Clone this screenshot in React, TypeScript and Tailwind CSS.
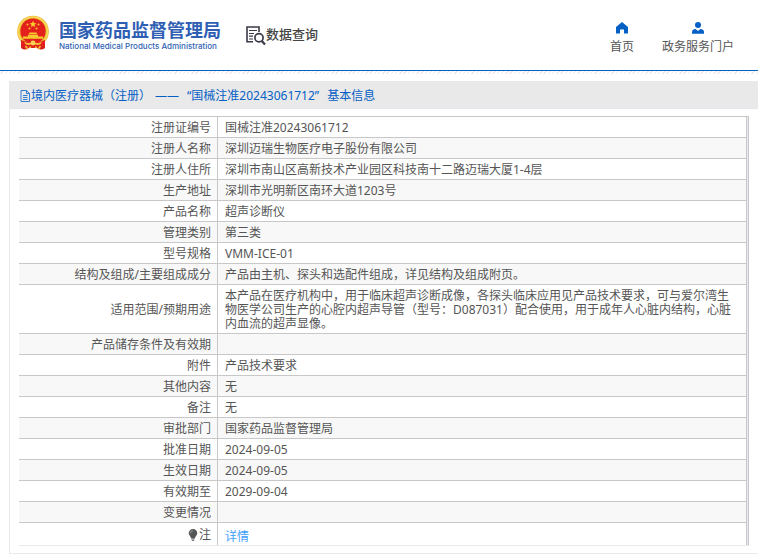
import React from "react";

interface InfoRow {
  label: string;
  value: string;
}

const rows: InfoRow[] = [
  { label: "注册证编号", value: "国械注准20243061712" },
  { label: "注册人名称", value: "深圳迈瑞生物医疗电子股份有限公司" },
  {
    label: "注册人住所",
    value: "深圳市南山区高新技术产业园区科技南十二路迈瑞大厦1-4层",
  },
  { label: "生产地址", value: "深圳市光明新区南环大道1203号" },
  { label: "产品名称", value: "超声诊断仪" },
  { label: "管理类别", value: "第三类" },
  { label: "型号规格", value: "VMM-ICE-01" },
  {
    label: "结构及组成/主要组成成分",
    value: "产品由主机、探头和选配件组成，详见结构及组成附页。",
  },
  {
    label: "适用范围/预期用途",
    value:
      "本产品在医疗机构中，用于临床超声诊断成像，各探头临床应用见产品技术要求，可与爱尔湾生物医学公司生产的心腔内超声导管（型号：D087031）配合使用，用于成年人心脏内结构，心脏内血流的超声显像。",
  },
  { label: "产品储存条件及有效期", value: "" },
  { label: "附件", value: "产品技术要求" },
  { label: "其他内容", value: "无" },
  { label: "备注", value: "无" },
  { label: "审批部门", value: "国家药品监督管理局" },
  { label: "批准日期", value: "2024-09-05" },
  { label: "生效日期", value: "2024-09-05" },
  { label: "有效期至", value: "2029-09-04" },
  { label: "变更情况", value: "" },
];

const Emblem: React.FC = () => (
  <svg width="34" height="36" viewBox="0 0 34 36" aria-hidden="true">
    <path d="M5 24L5 33Q9 36 13 33L21 33Q25 36 29 33L29 24Z" fill="#d8201c" />
    <circle cx="17" cy="16.5" r="15.8" fill="#e9b52c" />
    <circle cx="17" cy="16.5" r="14.4" fill="none" stroke="#f7d75a" strokeWidth="1.6" />
    <circle cx="17" cy="16" r="12.6" fill="#e3201b" />
    <path d="M5 25q12 5 24 0v6q-12 4-24 0z" fill="#e3201b" />
    <path
      d="M17 5.8l1 2.1 2.3.3-1.7 1.6.4 2.3-2-1.1-2 1.1.4-2.3-1.700-1.600 2.300-.3z"
      fill="#f8c92f"
    />
    <g fill="#f8c92f">
      <circle cx="11.5" cy="9.500" r="1" />
      <circle cx="22.5" cy="9.500" r="1" />
      <circle cx="13.5" cy="13.500" r="1" />
      <circle cx="20.5" cy="13.500" r="1" />
      <path d="M12.5 19.200l1.200-1.600h6.600l1.200 1.600z" />
      <path d="M12 19.800h10v1.700h5v2.200H7v-2.200h5z" />
    </g>
    <path
      d="M8 26.500q4.500 3 9 .2 4.500 2.800 9-.2l-1.500 2.700q-3.500 1.800-7.500-.7-4 2.500-7.500.7z"
      fill="#f1c23a"
    />
    <circle cx="17" cy="28" r="2.400" fill="#f8d35a" />
    <path
      d="M9.500 31l2 2.800M24.500 31l-2 2.800M13.500 33l1.200-1.600M20.500 33l-1.200-1.600"
      stroke="#f1c23a"
      strokeWidth="1.6"
    />
  </svg>
);

const QueryIcon: React.FC = () => (
  <svg width="20" height="20" viewBox="0 0 20 20" fill="none" stroke="#3b3946" aria-hidden="true">
    <path d="M7 15.800H1V1h12v5" strokeWidth="1.6" />
    <path d="M3 4.500h8M3 7.500h5M3 10.200h4M3 13h4" strokeWidth="1.2" />
    <circle cx="13" cy="11.8" r="4.1" strokeWidth="1.7" />
    <path d="M15.800 15l3.200 3.600" strokeWidth="2.2" />
  </svg>
);

const HomeIcon: React.FC = () => (
  <svg width="12" height="12" viewBox="0 0 12 12" fill="#0560c6" aria-hidden="true">
    <path d="M6 0L0 5v6.500h4V7.500h4v4h4V5z" />
  </svg>
);

const UserIcon: React.FC = () => (
  <svg width="12" height="12" viewBox="0 0 12 12" fill="#0560c6" aria-hidden="true">
    <circle cx="6" cy="3" r="3" />
    <path d="M0 11.800V10q0-2.600 3.600-3L6 9l2.400-2Q12 7.400 12 10v1.800z" />
  </svg>
);

const FileIcon: React.FC = () => (
  <svg width="11" height="12" viewBox="0 0 11 12" fill="none" stroke="#0560c6" aria-hidden="true">
    <path d="M1 .5h5.500l3 3v8H1z M6.500.5v3h3" strokeWidth=".8" />
    <path d="M3 5.500h4.500M3 7.500h4.500M3 9.500h4.500" strokeWidth=".8" />
  </svg>
);

const BulbIcon: React.FC = () => (
  <svg width="10" height="12" viewBox="0 0 10 12" aria-hidden="true">
    <path
      d="M5 0a4.300 4.300 0 0 0-4.300 4.300C.7 6.300 2.500 7 3 9h4c.5-2 2.300-2.700 2.300-4.700A4.300 4.300 0 0 0 5 0z"
      fill="#555"
    />
    <path d="M3.200 9.800h3.600M3.800 11.300h2.400" stroke="#555" />
    <path d="M2.300 4.300A2.700 2.700 0 0 1 5 1.700" fill="none" stroke="#bbb" strokeWidth=".7" />
  </svg>
);

const Header: React.FC = () => (
  <>
    <header className="flex h-[71px] items-start justify-between border-b border-[#0560c6] pl-4 pr-6">
      <div className="flex items-start">
        <a href="#" className="flex pt-[15px]">
          <Emblem />
          <span className="ml-[9px] mt-1 flex flex-col whitespace-nowrap text-[#2f5fb3]">
            <span className="text-[18px] font-bold leading-[22px]">
              国家药品监督管理局
            </span>
            <span className="font-['Inter','Liberation_Sans',sans-serif] text-[8px] font-medium leading-[10px]">
              National Medical Products Administration
            </span>
          </span>
        </a>
        <a
          href="#"
          className="ml-[25px] flex items-start whitespace-nowrap pt-[26px] text-[13px] font-medium leading-4 text-[#444]"
        >
          <QueryIcon />
          数据查询
        </a>
      </div>
      <nav className="flex gap-7 whitespace-nowrap pt-[22px] leading-4 text-[#555]">
        <a href="#" className="flex flex-col items-center gap-[5px]">
          <HomeIcon />
          首页
        </a>
        <a href="#" className="flex flex-col items-center gap-[5px]">
          <UserIcon />
          政务服务门户
        </a>
      </nav>
    </header>
    <div className="h-[3px] bg-[repeating-linear-gradient(135deg,#fff_0_2px,#f0e8e8_2px_3px)]" />
  </>
);

const App: React.FC = () => {
  return (
    <div className="bg-white font-['Noto_Sans','Noto_Sans_CJK_SC',sans-serif] text-xs text-[#555]">
      <Header />
      <main className="ml-[9px] mt-[7px]">
        <h1 className="flex h-7 items-center border-b border-[#e6e6ee] bg-[#e9e9e9] pl-[11px] pt-0.5 text-[#0560c6]">
          <FileIcon />
          <span>境内医疗器械（注册）</span>
          <span className="ml-1 mr-2">——</span>
          <span className="mr-2">“国械注准20243061712”</span>
          <span>基本信息</span>
        </h1>
        <section className="border-b border-l border-[#e9e9e9] py-[7px] pl-[9px] pr-[9px]">
          <div className="border-b border-r border-t border-b-[#ebebeb] border-r-[#c8c8cc] border-t-[#c8c8c8] bg-[#e9e9ef] pr-px">
            <table className="w-full table-fixed border-separate border-spacing-0 border-r border-[#c8c8c8] bg-white leading-[14px]">
              <colgroup>
                <col className="w-[199px]" />
                <col />
              </colgroup>
              <tbody>
                {rows.map((row) => (
                  <tr key={row.label} className="even:bg-[#f8f8f8]">
                    <th
                      scope="row"
                      className="h-[21px] border-b border-r border-[#c8c8c8] pb-0.5 pl-1.5 pr-1.5 pt-1 text-right font-normal"
                    >
                      {row.label}
                    </th>
                    <td className="border-b border-[#c8c8c8] pb-0.5 pl-[7px] pr-3 pt-1">
                      {row.value}
                    </td>
                  </tr>
                ))}
                <tr>
                  <th
                    scope="row"
                    className="h-[22px] border-r border-[#c8c8c8] pr-1.5 pt-0.5 font-normal"
                  >
                    <span className="flex items-center justify-end gap-px">
                      <BulbIcon />注
                    </span>
                  </th>
                  <td className="pl-[7px] pt-1.5">
                    <a href="#" className="text-[#409eff]">
                      详情
                    </a>
                  </td>
                </tr>
              </tbody>
            </table>
          </div>
        </section>
      </main>
    </div>
  );
};

export default App;
